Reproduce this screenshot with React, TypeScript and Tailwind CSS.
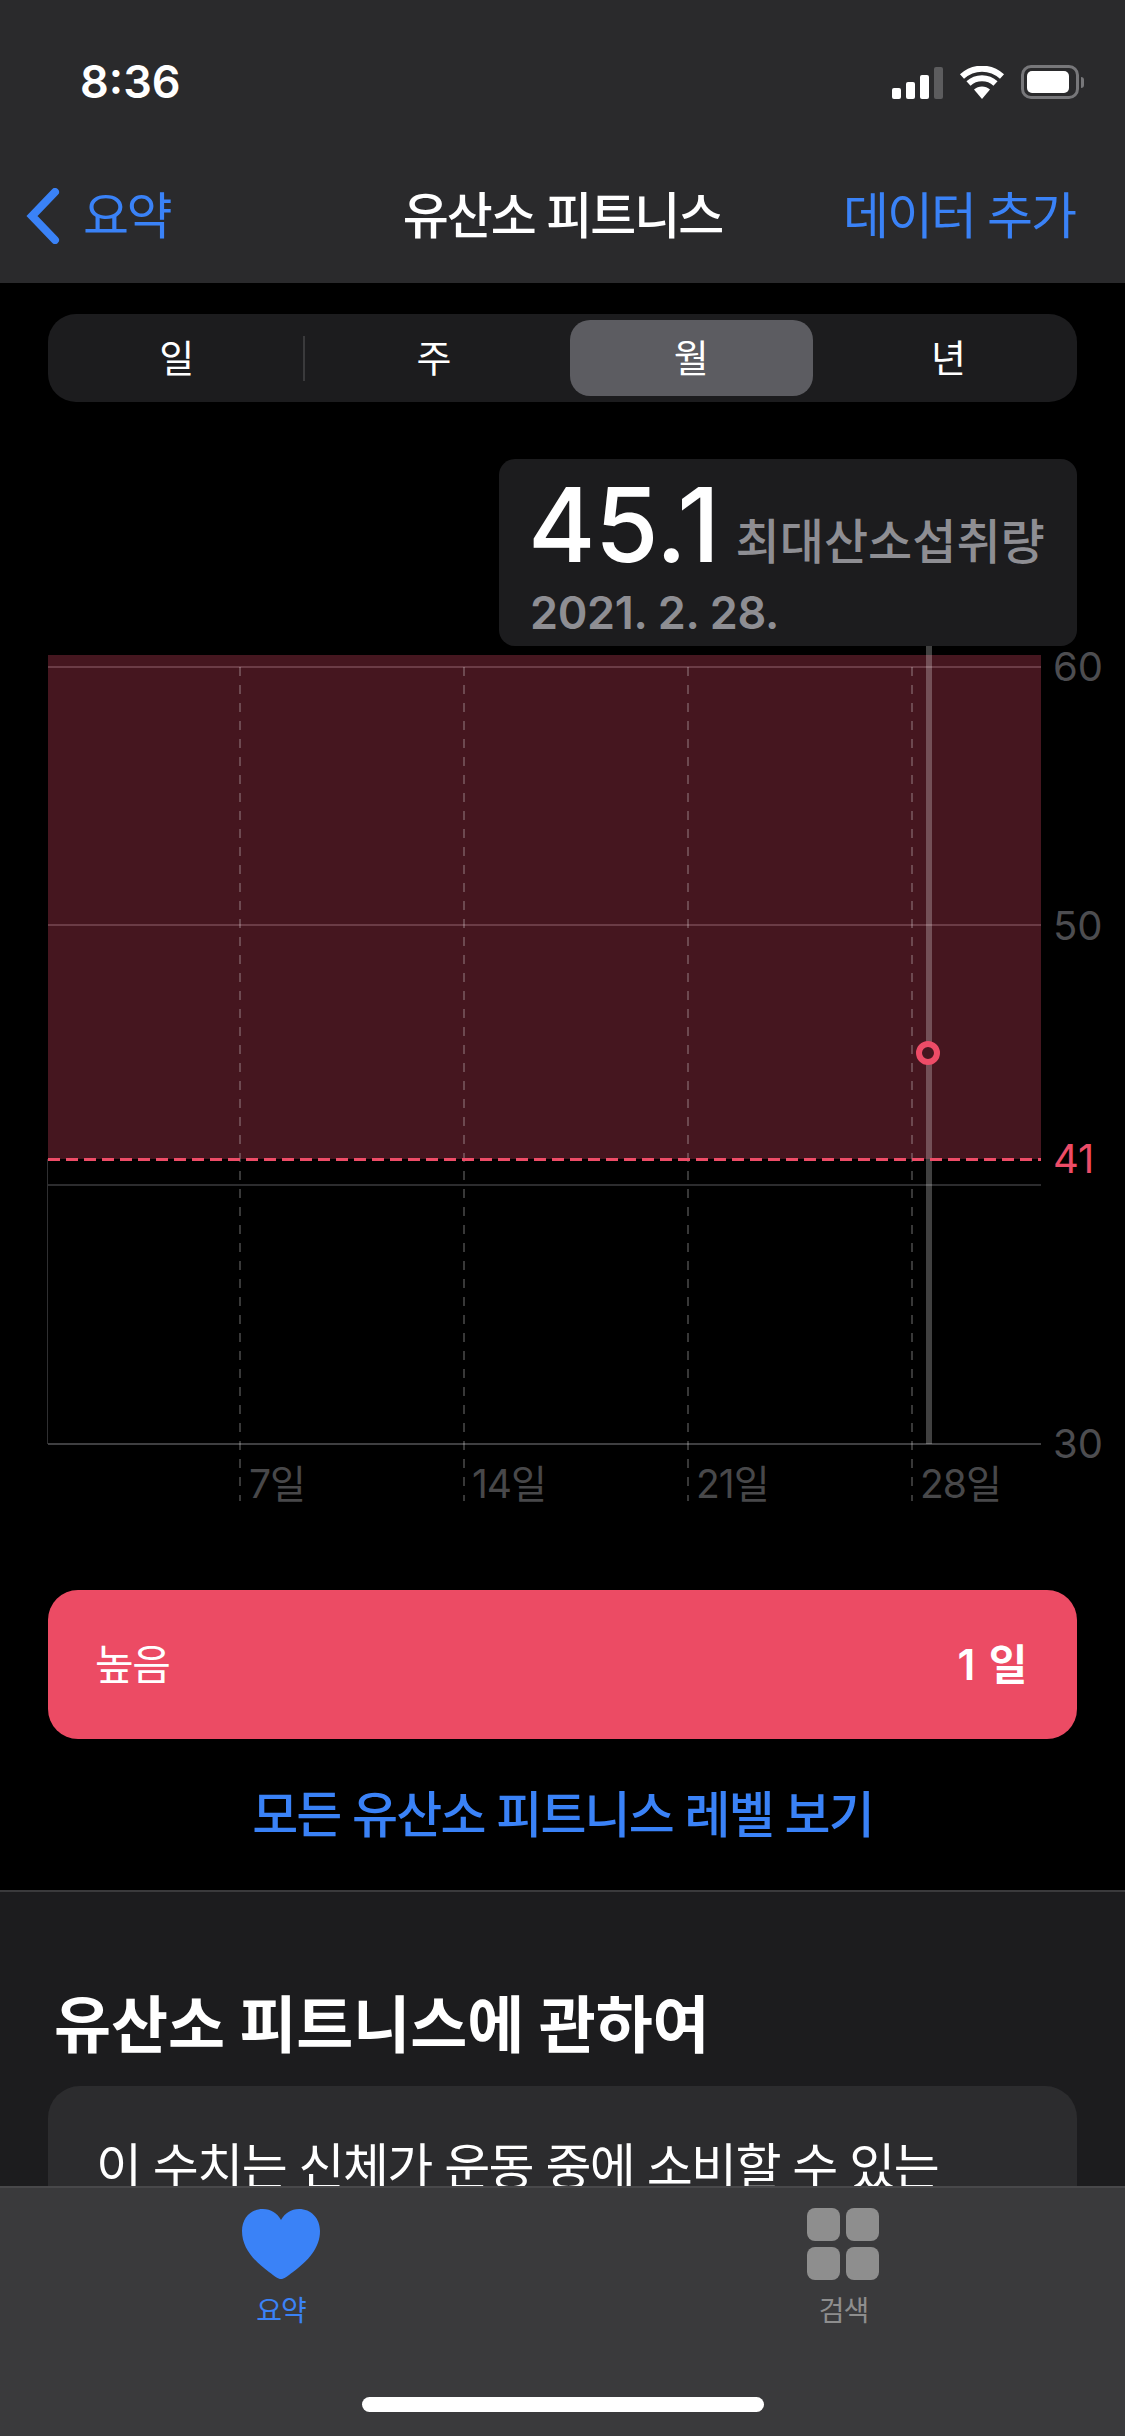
const font = "font-['Inter','Noto_Sans_CJK_KR',sans-serif]";

function StatusIcons() {
  return (
    <div className="flex items-end gap-[16px]">
      <div className="flex items-end gap-[5px]">
        <span className="w-[9px] h-[11px] rounded-[2px] bg-white" />
        <span className="w-[9px] h-[17px] rounded-[2px] bg-white" />
        <span className="w-[9px] h-[24px] rounded-[2px] bg-white" />
        <span className="w-[9px] h-[32px] rounded-[2px] bg-[#5c5c5e]" />
      </div>
      <svg width="46" height="33" viewBox="0 0 46 33" fill="none">
        <path d="M23 33 L31 23.5 C26.5 19.5 19.5 19.5 15 23.5 Z" fill="white" />
        <path d="M9.5 17.5 C17 10.5 29 10.5 36.5 17.5" stroke="white" strokeWidth="6" />
        <path d="M3 10.5 C14.5 0 31.5 0 43 10.5" stroke="white" strokeWidth="6" />
      </svg>
      <div className="flex items-center gap-[2px]">
        <div className="w-[58px] h-[34px] rounded-[10px] border-[3px] border-[#77777a] p-[3px]">
          <div className="w-[42px] h-full rounded-[5px] bg-white" />
        </div>
        <span className="w-[3px] h-[11px] rounded-r-full bg-[#77777a]" />
      </div>
    </div>
  );
}

function Chart() {
  const dashes = [240, 464, 688, 912];
  const grid = [667, 925, 1185, 1444];
  return (
    <div className="relative h-[864px]">
      <svg className="block" width="1125" height="864" viewBox="0 646 1125 864" fill="none">
        <rect x="48" y="655" width="993" height="504" fill="#45161f" />
        <line x1="47.5" y1="1159" x2="47.5" y2="1444" stroke="#2f2f31" strokeWidth="1" />
        {grid.map((y) => (
          <line
            key={y}
            x1="48"
            y1={y}
            x2="1041"
            y2={y}
            stroke={y < 1159 ? "#6b3c46" : y === 1444 ? "#3f3f41" : "#2c2c2e"}
            strokeWidth="2"
          />
        ))}
        {dashes.map((x) => (
          <line
            key={x}
            x1={x}
            y1="667"
            x2={x}
            y2="1501"
            stroke="rgba(255,255,255,0.22)"
            strokeWidth="2"
            strokeDasharray="9 9"
          />
        ))}
        <rect x="926" y="646" width="6" height="798" fill="rgba(255,255,255,0.25)" />
        <line x1="48" y1="1159.5" x2="1041" y2="1159.5" stroke="#ed4c67" strokeWidth="3" strokeDasharray="12 6" />
        <circle cx="928" cy="1053" r="9" fill="#45161f" stroke="#ed4c67" strokeWidth="6" />
      </svg>
      <span className="absolute left-[1053px] top-[0px] text-[40px] leading-[42px] text-[#4d4d50]">60</span>
      <span className="absolute left-[1053px] top-[259px] text-[40px] leading-[42px] text-[#4d4d50]">50</span>
      <span className="absolute left-[1053px] top-[492px] text-[40px] leading-[42px] text-[#ed4c67]">41</span>
      <span className="absolute left-[1053px] top-[777px] text-[40px] leading-[42px] text-[#4d4d50]">30</span>
      <span className="absolute left-[249px] top-[815px] text-[39px] leading-[46px] tracking-[-1px] text-[#48484a]">7일</span>
      <span className="absolute left-[472px] top-[815px] text-[39px] leading-[46px] tracking-[-1px] text-[#48484a]">14일</span>
      <span className="absolute left-[696px] top-[815px] text-[39px] leading-[46px] tracking-[-1px] text-[#48484a]">21일</span>
      <span className="absolute left-[920px] top-[815px] text-[39px] leading-[46px] tracking-[-1px] text-[#48484a]">28일</span>
    </div>
  );
}

export default function App() {
  return (
    <div className={`${font} relative w-[1125px] h-[2436px] overflow-hidden bg-black text-white`}>
      <header className="h-[283px] bg-[#2a2a2c]">
        <div className="h-[156px] pt-[65px] pl-[80px] pr-[41px] flex items-start justify-between">
          <span className="text-[45px] leading-[34px] font-semibold">8:36</span>
          <StatusIcons />
        </div>
        <div className="h-[120px] grid grid-cols-[1fr_auto_1fr] items-center">
          <div className="flex items-center gap-[23px] pl-[26px] text-[#3a82f7]">
            <svg width="34" height="56" viewBox="0 0 34 56" fill="none">
              <path d="M29 4 L6 28 L29 52" stroke="currentColor" strokeWidth="8" strokeLinecap="round" />
            </svg>
            <span className="text-[50px] tracking-[-2.5px]">요약</span>
          </div>
          <h1 className="text-[50px] font-medium tracking-[-2px]">유산소 피트니스</h1>
          <div className="flex justify-end pr-[50px] text-[50px] tracking-[-2px] text-[#3a82f7]">데이터 추가</div>
        </div>
      </header>

      <main>
        <div className="pt-[31px] px-[48px]">
          <div className="h-[88px] rounded-[28px] bg-[#1c1c1e] grid grid-cols-4 items-center text-center text-[38px]">
            <div className="relative">
              일
              <span className="absolute right-0 top-[6px] w-[2px] h-[45px] bg-[#3a3a3c]" />
            </div>
            <div>주</div>
            <div className="h-[76px] mx-[7px] rounded-[20px] bg-[#5c5c61] flex items-center justify-center">월</div>
            <div>년</div>
          </div>
        </div>

        <div className="relative z-10 ml-[499px] mt-[57px] w-[578px] h-[187px] rounded-[16px] bg-[#1c1c1e] pl-[31px] pt-[11px]">
          <div className="flex items-baseline gap-[16px]">
            <span className="-ml-[2px] text-[103px] leading-[110px] font-medium tracking-[-0.5px]">45.1</span>
            <span className="-translate-y-[3px] text-[48px] leading-[56px] font-medium text-[#8e8e93]">최대산소섭취량</span>
          </div>
          <div className="mt-[8px] text-[45px] leading-[50px] font-semibold tracking-[-0.3px] text-[#8e8e93]">2021. 2. 28.</div>
        </div>

        <Chart />

        <div className="mt-[80px] mx-[48px] h-[149px] rounded-[30px] bg-[#ec4b64] flex items-center justify-between pl-[47px] pr-[48px] text-[42px]">
          <span className="tracking-[-1.5px]">높음</span>
          <span className="font-semibold tracking-[1.5px]">1 일</span>
        </div>

        <div className="h-[151px] pt-[2px] flex items-center justify-center text-[50px] font-medium tracking-[-1.8px] text-[#3a82f7]">
          모든 유산소 피트니스 레벨 보기
        </div>

        <section className="h-[546px] border-t-2 border-[#3a3a3c] bg-[#1c1c1e] pt-[99px]">
          <h2 className="pl-[54px] text-[62px] leading-[70px] font-bold tracking-[-0.1px]">유산소 피트니스에 관하여</h2>
          <div className="mt-[25px] mx-[48px] h-[300px] rounded-[32px] bg-[#2c2c2e] pt-[44px] pl-[48px] text-[50px] tracking-[-1.6px]">
            이 수치는 신체가 운동 중에 소비할 수 있는
          </div>
        </section>
      </main>

      <nav className="absolute left-0 right-0 bottom-0 h-[250px] border-t-2 border-[#48484a] bg-[#3a3a3c] pt-[20px]">
        <div className="flex">
          <div className="w-[562px] flex flex-col items-center text-[#3a82f7]">
            <svg width="78" height="70" viewBox="0 0 78 70" className="mt-[1px]">
              <path
                fill="currentColor"
                d="M39 70 C36 70 33 67.5 27 63 C12 52 0 39 0 22 C0 9 9 0 21 0 C29 0 35 4 39 11 C43 4 49 0 57 0 C69 0 78 9 78 22 C78 39 66 52 51 63 C45 67.5 42 70 39 70 Z"
              />
            </svg>
            <span className="mt-[15px] text-[28px] leading-[34px] tracking-[-1px]">요약</span>
          </div>
          <div className="w-[563px] flex flex-col items-center text-[#8e8e8e]">
            <div className="grid grid-cols-2 gap-[6px] -ml-[1px]">
              <span className="w-[33px] h-[33px] rounded-[8px] bg-[#8e8e8e]" />
              <span className="w-[33px] h-[33px] rounded-[8px] bg-[#8e8e8e]" />
              <span className="w-[33px] h-[33px] rounded-[8px] bg-[#8e8e8e]" />
              <span className="w-[33px] h-[33px] rounded-[8px] bg-[#8e8e8e]" />
            </div>
            <span className="mt-[14px] text-[28px] leading-[34px] tracking-[-1px]">검색</span>
          </div>
        </div>
        <div className="absolute left-[362px] bottom-[24px] w-[402px] h-[15px] rounded-full bg-white" />
      </nav>
    </div>
  );
}
